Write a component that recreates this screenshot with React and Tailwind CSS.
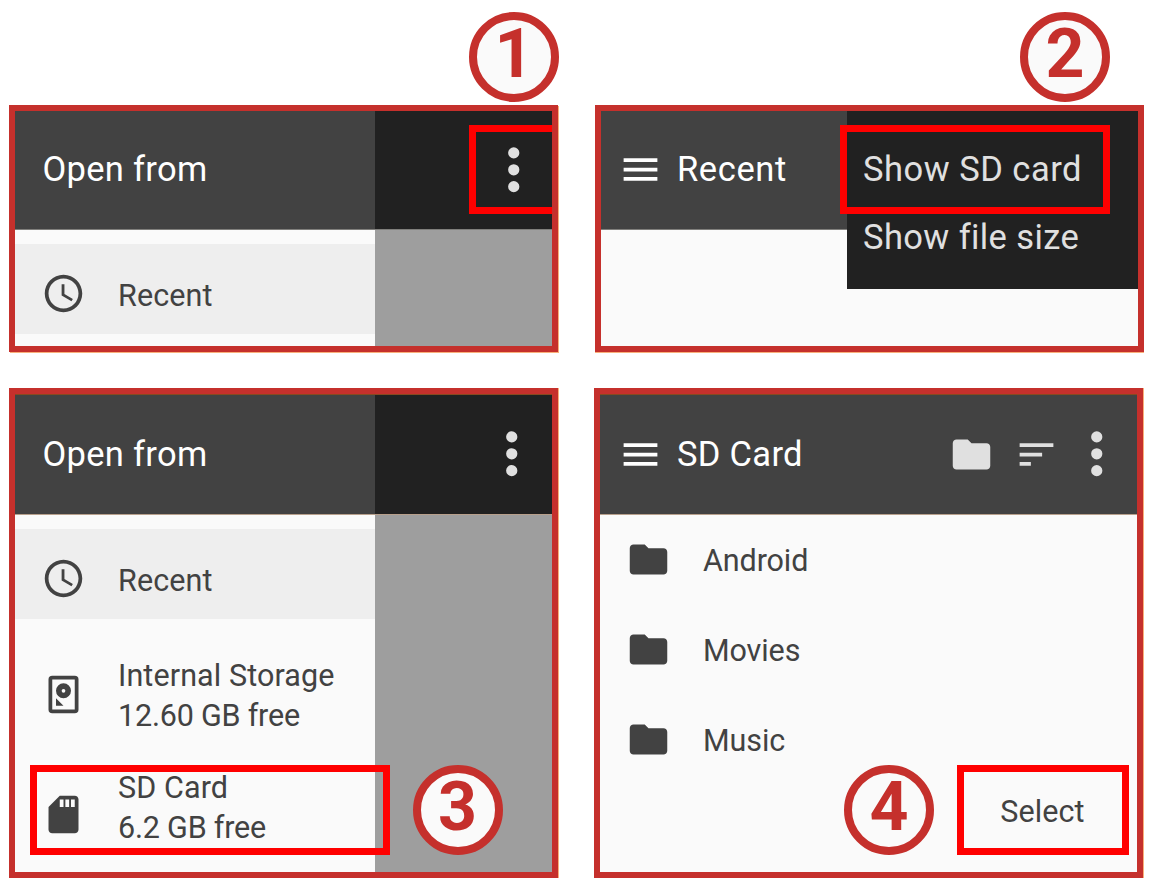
const RED = "border-[#c5302c]";

function Icon({ d, className }) {
  return (
    <svg viewBox="0 0 24 24" fill="currentColor" className={`shrink-0 ${className}`}>
      <path fillRule="evenodd" d={d} />
    </svg>
  );
}

const PATHS = {
  menu: "M3 18h18v-2H3v2zm0-5h18v-2H3v2zm0-7v2h18V6H3z",
  more: "M12 8a2 2 0 1 0 0-4 2 2 0 0 0 0 4zm0 2a2 2 0 1 0 0 4 2 2 0 0 0 0-4zm0 6a2 2 0 1 0 0 4 2 2 0 0 0 0-4z",
  sort: "M3 18h6v-2H3v2zM3 6v2h18V6H3zm0 7h12v-2H3v2z",
  folder: "M10 4H4c-1.1 0-1.99.9-1.99 2L2 18c0 1.1.9 2 2 2h16c1.1 0 2-.9 2-2V8c0-1.1-.9-2-2-2h-8l-2-2z",
  clock:
    "M11.99 2C6.47 2 2 6.48 2 12s4.47 10 9.99 10C17.52 22 22 17.52 22 12S17.52 2 11.99 2zM12 20c-4.42 0-8-3.58-8-8s3.58-8 8-8 8 3.58 8 8-3.58 8-8 8zm.5-13H11v6l5.25 3.15.75-1.23-4.5-2.67V7z",
  disk: "M6 2h12a2 2 0 0 1 2 2v16a2 2 0 0 1-2 2H6a2 2 0 0 1-2-2V4a2 2 0 0 1 2-2zm0 2v16h12V4H6zm6 2a4 4 0 1 1 0 8 4 4 0 0 1 0-8zm0 3a1 1 0 1 0 0 2 1 1 0 0 0 0-2zM8 14l4 4H8v-4z",
  sd: "M18 2h-8L4.02 8 4 20c0 1.1.9 2 2 2h12c1.1 0 2-.9 2-2V4c0-1.1-.9-2-2-2zm-6 6h-2V4h2v4zm3 0h-2V4h2v4zm3 0h-2V4h2v4z",
};

function Badge({ n, className }) {
  return (
    <div
      className={`absolute flex h-[90px] w-[90px] justify-center rounded-full border-8 bg-[#fafafa] text-[68px] leading-[68px] font-bold tracking-normal text-[#c5302c] ${RED} ${className}`}
    >
      {n}
    </div>
  );
}

function Panel({ className, children }) {
  return <section className={`relative flex w-[549px] flex-col border-[6px] bg-[#fafafa] ${RED} ${className}`}>{children}</section>;
}

function Highlight({ className }) {
  return <div className={`absolute border-[#ff0000] ${className}`} />;
}

function DrawerHeader({ className, titleClass, iconClass }) {
  return (
    <header className={`relative flex shrink-0 ${className}`}>
      <h2 className={`flex w-[360px] items-center bg-[#424242] pl-[27.5px] text-[34.5px] tracking-[0.3px] text-white ${titleClass}`}>
        Open from
      </h2>
      <div className={`flex flex-1 items-center justify-end bg-[#212121] text-[#e0e0e0] ${iconClass}`}>
        <Icon d={PATHS.more} className="size-[67.5px]" />
      </div>
    </header>
  );
}

function RecentRow() {
  return (
    <div className="mt-[15px] flex h-[90px] shrink-0 bg-[#eeeeee] pl-[26px]">
      <Icon d={PATHS.clock} className="mt-[26.5px] size-[45px]" />
      <span className="mt-[32px] ml-[32px] leading-[40px]">Recent</span>
    </div>
  );
}

function StorageRow({ icon, name, free, textClass }) {
  return (
    <div className="flex h-[120px] items-center pl-[26px]">
      <Icon d={icon} className="size-[45px]" />
      <div className={`ml-[32px] leading-[40px] ${textClass}`}>
        <div>{name}</div>
        <div className="tracking-[-0.2px]">{free}</div>
      </div>
    </div>
  );
}

export default function App() {
  return (
    <main className="relative h-[889px] w-[1155px] overflow-hidden bg-white pt-[105px] pl-[9px] font-['Roboto',sans-serif] text-[30.5px] tracking-[0.1px] whitespace-nowrap text-[#424242]">
      <div className="flex gap-[37px]">
        <Panel className="h-[247px] shadow-[1px_1px_0_#f9b07a]">
          <DrawerHeader className="h-[118px] shadow-[0_1px_0_#807f7c]" titleClass="pb-px" iconClass="pr-[4.5px]" />
          <div className="flex min-h-0 flex-1">
            <div className="w-[360px]">
              <RecentRow />
            </div>
            <div className="flex-1 bg-[#9e9e9e]" />
          </div>
          <Highlight className="top-[14px] left-[454px] h-[89px] w-[83px] border-y-[7px] border-l-[7px]" />
        </Panel>
        <Panel className="h-[247px] shadow-[0_1px_0_#f9b07a]">
          <header className="relative flex h-[118px] items-center bg-[#424242] pl-[17px] text-white shadow-[0_1px_0_#807f7c]">
            <Icon d={PATHS.menu} className="-mt-px size-[45px]" />
            <h2 className="ml-[14px] pb-px text-[34.5px] tracking-[0.6px]">Recent</h2>
          </header>
          <div className="absolute top-0 right-0 h-[178px] w-[291px] bg-[#212121] pt-[25px] pl-[16px] text-[34.5px] leading-[67.5px] tracking-[0.5px] text-[#e0e0e0]">
            <div>Show SD card</div>
            <div className="tracking-[0.4px]">Show file size</div>
          </div>
          <Highlight className="top-[14px] left-[239px] h-[89px] w-[270px] border-[7px]" />
        </Panel>
      </div>
      <div className="mt-[36px] flex gap-[36px]">
        <Panel className="h-[490px] shadow-[1px_0_0_#f9b07a]">
          <DrawerHeader className="h-[120px] border-t border-[#87491f] shadow-[0_1px_0_#b8a08c]" titleClass="pt-px" iconClass="pr-[6.5px] pb-px" />
          <div className="flex min-h-0 flex-1">
            <div className="w-[360px]">
              <RecentRow />
              <div className="mt-[15px]">
                <StorageRow icon={PATHS.disk} name="Internal Storage" free="12.60 GB free" textClass="mt-[4px]" />
                <StorageRow icon={PATHS.sd} name="SD Card" free="6.2 GB free" textClass="-mt-[12px]" />
              </div>
            </div>
            <div className="flex-1 bg-[#9e9e9e]" />
          </div>
          <Highlight className="top-[371px] left-[15px] h-[90px] w-[360px] border-[7px]" />
        </Panel>
        <Panel className="h-[490px] shadow-[1px_0_0_#f9b07a]">
          <header className="relative flex h-[120px] shrink-0 items-center border-t border-[#87491f] bg-[#424242] pl-[18px] text-white shadow-[0_1px_0_#b8a08c]">
            <Icon d={PATHS.menu} className="size-[45px]" />
            <h2 className="ml-[14px] flex-1 pt-px text-[34.5px] tracking-[0.3px]">SD Card</h2>
            <div className="flex items-center pr-[7px] pb-px text-[#e0e0e0]">
              <Icon d={PATHS.folder} className="size-[45px]" />
              <Icon d={PATHS.sort} className="ml-[20px] size-[45px]" />
              <Icon d={PATHS.more} className="ml-[4px] size-[67.5px]" />
            </div>
          </header>
          {["Android", "Movies", "Music"].map((name) => (
            <div key={name} className="flex h-[90px] items-center pl-[26px]">
              <Icon d={PATHS.folder} className="size-[45px]" />
              <span className="ml-[32px] pt-[3px] tracking-[-0.1px]">{name}</span>
            </div>
          ))}
          <div className="absolute top-[371px] left-[356.5px] flex h-[90px] w-[172px] items-center justify-center border-[7px] border-[#ff0000] pt-[3px]">
            Select
          </div>
        </Panel>
      </div>
      <Badge n="1" className="top-[12px] left-[469px]" />
      <Badge n="2" className="top-[12px] left-[1020px]" />
      <Badge n="3" className="top-[765px] left-[412.5px]" />
      <Badge n="4" className="top-[765px] left-[844px]" />
    </main>
  );
}
